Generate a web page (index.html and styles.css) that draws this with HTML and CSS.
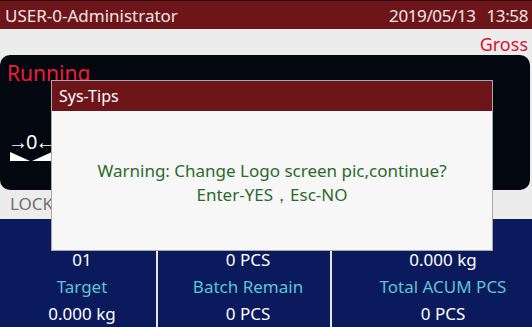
FILE: index.html
```html
<!DOCTYPE html>
<html lang="en">
<head>
    <meta charset="UTF-8">
    <title>Scale - Sys-Tips</title>
    <link rel="stylesheet" href="styles.css">
</head>
<body>

    <div class="screen">
        <div class="topbar">
            <span>USER-0-Administrator</span>
            <span class="clock"><span>2019/05/13</span><span>13:58</span></span>
        </div>

        <div class="mode-row">Gross</div>

        <div class="weight-panel">
            <div class="status">Running</div>
            <div class="zero-mark">
                <div class="zero-arrows">&rarr;0&larr;</div>
                <svg class="zero-wedge" width="42" height="9" viewBox="0 0 42 9">
                    <polygon points="0,0 20,9 0,9" fill="#fff"/>
                    <polygon points="42,0 42,9 22,9" fill="#fff"/>
                </svg>
            </div>
        </div>

        <div class="lock-row">LOCK</div>

        <div class="info-grid">
            <div class="info-col">
                <div class="label">PLU No.</div>
                <div class="value">01</div>
                <div class="label">Target</div>
                <div class="value">0.000 kg</div>
            </div>
            <div class="info-col">
                <div class="label">Batch Total</div>
                <div class="value">0 PCS</div>
                <div class="label">Batch Remain</div>
                <div class="value">0 PCS</div>
            </div>
            <div class="info-col wide">
                <div class="label">Total Weight</div>
                <div class="value">0.000 kg</div>
                <div class="label">Total ACUM PCS</div>
                <div class="value">0 PCS</div>
            </div>
        </div>

        <!-- popup over the main screen -->
        <div class="dialog">
            <div class="dialog-title">Sys-Tips</div>
            <div class="dialog-body">
                <p>Warning: Change Logo screen pic,continue?</p>
                <p>Enter-YES，Esc-NO</p>
            </div>
        </div>
    </div>

</body>
</html>
```

FILE: styles.css
```css
body {
    margin: 0;
    padding: 0;
    font-family: 'Noto Sans', 'Open Sans', sans-serif;
    background: #ececec;
}

.screen {
    position: relative;
    width: 532px;
    height: 327px;
    overflow: hidden;
    background: #ececec;
}

.topbar {
    height: 29px;
    display: flex;
    justify-content: space-between;
    align-items: center;
    padding: 0 4px 0 5px;
    background: #6e1519;
    border-top: 1px solid #2a0a0a;
    box-sizing: border-box;
    color: #f2e6e6;
    font-size: 17px;
}

.clock {
    display: flex;
    gap: 11px;
    letter-spacing: -0.4px;
}

.mode-row {
    height: 26px;
    padding-right: 4px;
    text-align: right;
    color: #d8142e;
    font-size: 18px;
    line-height: 30px;
}

.weight-panel {
    height: 135px;
    margin-right: 2px;
    background: #03070f;
    border-radius: 10px;
    display: flex;
    flex-direction: column;
    justify-content: space-between;
    padding: 4px 0 29px 10px;
    box-sizing: border-box;
}

.status {
    color: #ee1d3a;
    font-size: 21px;
    line-height: 28px;
    margin-left: -3px;
}

.zero-mark {
    width: 42px;
    color: #fff;
}

.zero-arrows {
    font-size: 20px;
    line-height: 18px;
    text-align: center;
    letter-spacing: -2px;
    margin-left: -2px;
}

.zero-wedge {
    display: block;
    margin-top: 1px;
}

.lock-row {
    height: 29px;
    padding-left: 10px;
    color: #707070;
    font-size: 17px;
    line-height: 28px;
}

.info-grid {
    display: grid;
    grid-template-columns: 156px 172px 1fr;
    gap: 2px;
    height: 108px;
    background: #e6e6e6;
}

.info-col {
    background: #0b1a5c;
    text-align: center;
    padding-left: 8px;
    font-size: 17px;
    line-height: 27px;
}

.info-col.wide {
    padding-left: 22px;
}

.label {
    color: #5fc4d6;
}

.value {
    color: #fff;
}

.dialog {
    position: absolute;
    left: 51px;
    top: 80px;
    width: 442px;
    height: 171px;
    background: #f7f7f7;
    border: 1px solid #a8a8a8;
    box-sizing: border-box;
}

.dialog-title {
    height: 30px;
    background: #6e1519;
    color: #fff;
    font-size: 16px;
    line-height: 30px;
    padding-left: 7px;
}

.dialog-body {
    padding-top: 48px;
    text-align: center;
    color: #2b6a2b;
    font-size: 17px;
    line-height: 24px;
}

.dialog-body p {
    margin: 0;
}
```
